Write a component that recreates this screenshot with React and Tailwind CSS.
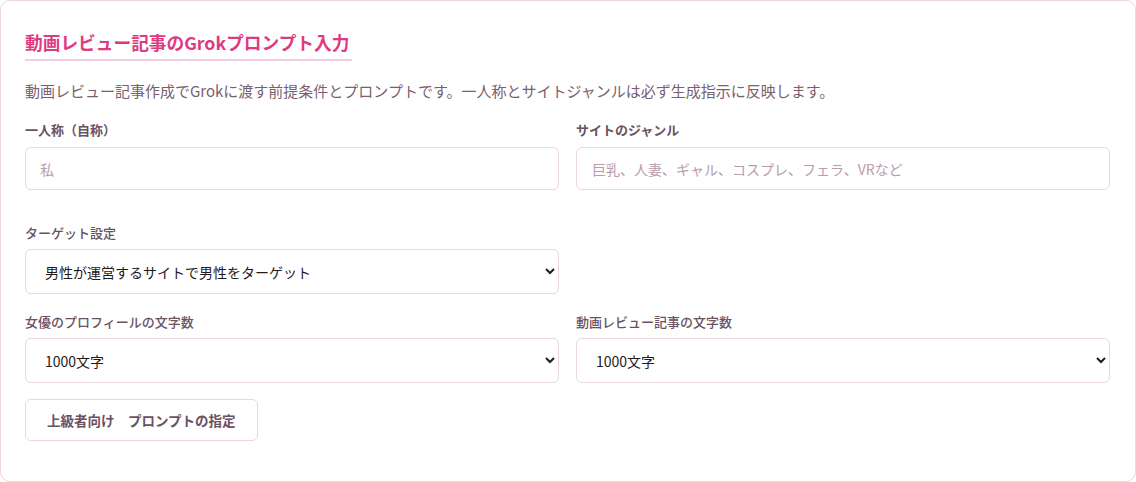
import React, { useState } from 'react';

const labelCls = 'block text-[13px] leading-5 text-[#6b5262]';
const fieldCls =
  'w-full rounded-md border border-[#ecd6df] bg-white text-[14px] outline-none';

function App() {
  const [persona, setPersona] = useState('');
  const [genre, setGenre] = useState('');
  const [target, setTarget] = useState('male-male');
  const [profileLen, setProfileLen] = useState('1000');
  const [reviewLen, setReviewLen] = useState('1000');

  return (
    <div
      className="w-[1136px] h-[482px] bg-white"
      style={{ fontFamily: '"Noto Sans CJK JP", "Noto Sans", sans-serif' }}
    >
      <div className="h-full rounded-[10px] border border-[#f0d4e0] bg-white pl-6 pr-[25px] pt-[28px] pb-[40px]">
        {/* Heading */}
        <h2 className="inline-block border-b-2 border-[#f2cfe0] pb-[3px] pr-[3px] text-[17.7px] leading-[27px] font-bold text-[#de3a80]">
          動画レビュー記事のGrokプロンプト入力
        </h2>
        <p className="mt-[18px] text-[15px] leading-6 text-[#7a5f6e]">
          動画レビュー記事作成でGrokに渡す前提条件とプロンプトです。一人称とサイトジャンルは必ず生成指示に反映します。
        </p>

        {/* Persona / genre */}
        <div className="mt-[17px] grid grid-cols-2 gap-x-[17px]">
          <div>
            <label className={`${labelCls} font-semibold`}>一人称（自称）</label>
            <input
              value={persona}
              onChange={(e) => setPersona(e.target.value)}
              placeholder="私"
              className={`${fieldCls} mt-[7px] h-[43px] px-[14px] placeholder:text-[#b99cab]`}
            />
          </div>
          <div>
            <label className={`${labelCls} font-semibold`}>サイトのジャンル</label>
            <input
              value={genre}
              onChange={(e) => setGenre(e.target.value)}
              placeholder="巨乳、人妻、ギャル、コスプレ、フェラ、VRなど"
              className={`${fieldCls} mt-[7px] h-[43px] px-[15px] placeholder:text-[#b99cab]`}
            />
          </div>
        </div>

        {/* Target */}
        <div className="mt-[33px] grid grid-cols-2 gap-x-[17px]">
          <div>
            <label className={`${labelCls} font-medium`}>ターゲット設定</label>
            <select
              value={target}
              onChange={(e) => setTarget(e.target.value)}
              className={`${fieldCls} mt-[6px] h-[45px] pl-[15px] pr-2 text-[#1f1a1d]`}
            >
              <option value="male-male">男性が運営するサイトで男性をターゲット</option>
              <option value="female-male">女性が運営するサイトで男性をターゲット</option>
              <option value="female-female">女性が運営するサイトで女性をターゲット</option>
            </select>
          </div>
        </div>

        {/* Lengths */}
        <div className="mt-[18px] grid grid-cols-2 gap-x-[17px]">
          <div>
            <label className={`${labelCls} font-medium`}>女優のプロフィールの文字数</label>
            <select
              value={profileLen}
              onChange={(e) => setProfileLen(e.target.value)}
              className={`${fieldCls} mt-[6px] h-[45px] pl-[15px] pr-2 text-[#1f1a1d]`}
            >
              <option value="500">500文字</option>
              <option value="1000">1000文字</option>
              <option value="1500">1500文字</option>
            </select>
          </div>
          <div>
            <label className={`${labelCls} font-medium`}>動画レビュー記事の文字数</label>
            <select
              value={reviewLen}
              onChange={(e) => setReviewLen(e.target.value)}
              className={`${fieldCls} mt-[6px] h-[45px] pl-[15px] pr-2 text-[#1f1a1d]`}
            >
              <option value="500">500文字</option>
              <option value="1000">1000文字</option>
              <option value="2000">2000文字</option>
            </select>
          </div>
        </div>

        <button
          type="button"
          className="mt-[16px] h-[42px] rounded-md border border-[#ecd6df] bg-white px-[21px] text-[13.5px] font-bold text-[#6b5262]"
        >
          上級者向け　プロンプトの指定
        </button>
      </div>
    </div>
  );
}

export default App;
